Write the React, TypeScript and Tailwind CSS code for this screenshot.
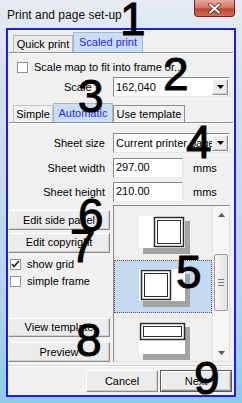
import React from "react";

const raised =
  "border border-t-white border-l-white border-b-[#8c8c8c] border-r-[#8c8c8c] shadow-[inset_-1px_-1px_0_#cfcfcf] bg-[#ececec]";
const sunken =
  "border border-t-[#8a8a8a] border-l-[#8a8a8a] border-b-[#e6e6e6] border-r-[#e6e6e6] bg-white";

function DropArrow() {
  return (
    <div className={`w-[16px] h-full flex items-center justify-center ${raised}`}>
      <svg width="7" height="4" viewBox="0 0 7 4">
        <path d="M0 0h7L3.5 4z" fill="#000" />
      </svg>
    </div>
  );
}

function Combo({ value }: { value: string }) {
  return (
    <div className={`w-[117px] h-[20px] flex items-stretch p-[1px] ${sunken}`}>
      <span className="flex-1 pl-[1px] leading-[16px] overflow-hidden whitespace-nowrap">{value}</span>
      <DropArrow />
    </div>
  );
}

function Check({ checked, label }: { checked?: boolean; label: string }) {
  return (
    <div className="flex items-center h-[13px]">
      <div className="w-[11px] h-[11px] border border-[#8f8f8f] bg-white flex items-center justify-center">
        {checked && (
          <svg width="9" height="8" viewBox="0 0 9 8">
            <path d="M1 4l2 2.5L8 1" stroke="#222" strokeWidth="1.6" fill="none" />
          </svg>
        )}
      </div>
      <span className="ml-[6px]">{label}</span>
    </div>
  );
}

function Btn({ label, w = "w-[102px]", extra = "" }: { label: string; w?: string; extra?: string }) {
  return (
    <div className={`${w} h-[20px] flex items-center justify-center ${raised} ${extra}`}>{label}</div>
  );
}

function Thumb({ kind }: { kind: "right" | "left" | "top" }) {
  return (
    <svg width="96" height="53" viewBox="0 0 96 53">
      <rect x="29" y="14" width="47" height="33" fill="#a3a3a3" />
      <rect x="25" y="9" width="46" height="32" fill="#fff" />
      {kind === "right" && (
        <g fill="none" stroke="#2b2b2b">
          <rect x="40.5" y="10.5" width="29" height="29" strokeWidth="1.5" />
          <rect x="43.5" y="13.5" width="23" height="23" fill="#fff" />
        </g>
      )}
      {kind === "left" && (
        <g fill="none" stroke="#2b2b2b">
          <rect x="27.5" y="10.5" width="29" height="29" strokeWidth="1.5" />
          <rect x="30.5" y="13.5" width="23" height="23" fill="#fff" />
        </g>
      )}
      {kind === "top" && (
        <g fill="none" stroke="#2b2b2b">
          <rect x="26.5" y="10.5" width="44" height="16" strokeWidth="1.5" />
          <rect x="29.5" y="13.5" width="38" height="10" fill="#fff" />
        </g>
      )}
    </svg>
  );
}

const marks = [
  { n: "1", c: "left-[120px] top-[-4px]" },
  { n: "2", c: "left-[163px] top-[51px]" },
  { n: "3", c: "left-[78px] top-[73px]" },
  { n: "4", c: "left-[186px] top-[119px]" },
  { n: "5", c: "left-[176px] top-[249px]" },
  { n: "6", c: "left-[78px] top-[192px]" },
  { n: "7", c: "left-[70px] top-[223px]" },
  { n: "8", c: "left-[76px] top-[317px]" },
  { n: "9", c: "left-[194px] top-[355px]" },
];

export default function App() {
  return (
    <div className="relative w-[242px] h-[403px] overflow-hidden bg-[linear-gradient(180deg,#e7ecf2_0%,#d3e0ee_20%,#bcd3ea_70%,#8ccbea_100%)] font-['Liberation_Sans',Arial,sans-serif] text-[11px] text-black">
      {/* title bar */}
      <div className="h-[28px] flex items-start">
        <span className="ml-[7px] mt-[6px] text-[12px] text-[#111]">Print and page set-up</span>
        <div className="ml-auto mr-[7px] w-[41px] h-[17px] rounded-b-[4px] border border-t-0 border-[#6d2a22] bg-[linear-gradient(180deg,#e9a99c_0%,#d7735f_50%,#c2402c_55%,#d0705a_100%)] flex items-center justify-center">
          <svg width="13" height="11" viewBox="0 0 13 11">
            <path d="M2 1.5l9 8M11 1.5l-9 8" stroke="#5a2a24" strokeWidth="3.6" strokeLinecap="round" />
            <path d="M2 1.5l9 8M11 1.5l-9 8" stroke="#fff" strokeWidth="2" strokeLinecap="round" />
          </svg>
        </div>
      </div>

      {/* client area */}
      <div className="ml-[6px] w-[230px] h-[369px] border-2 border-[#1c1cf2] bg-[#f0f0f0] flex flex-col">
        {/* main tabs */}
        <div className="h-[22px] flex items-end pl-[5px]">
          <div className="w-[60px] h-[17px] border border-b-0 border-[#b5b5b5] bg-[#ececec] flex items-center justify-center">
            Quick print
          </div>
          <div className="w-[70px] h-[20px] border border-b-0 border-[#a8b8cc] bg-[#c9ddf4] flex items-center justify-center text-[#2a2aff]">
            Scaled print
          </div>
        </div>
        <div className="h-[2px] mx-[1px] border-t border-[#8e8e8e] border-b border-b-white" />

        <div className="mt-[7px] pl-[9px]">
          <Check label="Scale map to fit into frame or..." />
        </div>

        <div className="mt-[3px] h-[20px] flex items-center">
          <span className="w-[105px] pl-[56px]">Scale</span>
          <Combo value="162,040" />
        </div>

        {/* sub tabs */}
        <div className="h-[25px] flex items-end pl-[5px]">
          <div className="w-[40px] h-[17px] border border-b-0 border-[#c4c4c4] flex items-center justify-center">
            Simple
          </div>
          <div className="w-[60px] h-[19px] border border-b-0 border-[#a8b8cc] bg-[#c9ddf4] flex items-center justify-center text-[#2a2aff]">
            Automatic
          </div>
          <div className="w-[72px] h-[17px] border border-b-0 border-[#8e8e8e] bg-[#f0f0f0] flex items-center justify-center">
            Use template
          </div>
        </div>
        <div className="h-[2px] mx-[1px] border-t border-[#8e8e8e] border-b border-b-white" />

        <div className="mt-[9px] h-[20px] flex items-center">
          <span className="w-[97px] text-right">Sheet size</span>
          <div className="ml-[8px]">
            <Combo value="Current printer page" />
          </div>
        </div>
        <div className="mt-[5px] h-[20px] flex items-center">
          <span className="w-[97px] text-right">Sheet width</span>
          <div className={`ml-[8px] w-[70px] h-[20px] pl-[2px] leading-[17px] ${sunken}`}>297.00</div>
          <span className="ml-[10px]">mms</span>
        </div>
        <div className="mt-[4px] h-[20px] flex items-center">
          <span className="w-[97px] text-right">Sheet height</span>
          <div className={`ml-[8px] w-[70px] h-[20px] pl-[2px] leading-[17px] ${sunken}`}>210.00</div>
          <span className="ml-[10px]">mms</span>
        </div>

        {/* body */}
        <div className="mt-[3px] h-[157px] flex">
          <div className="w-[102px] flex flex-col">
            <Btn label="Edit side panel" extra="mt-[5px]" />
            <Btn label="Edit copyright" extra="mt-[3px]" />
            <div className="mt-[5px] pl-[2px]">
              <Check checked label="show grid" />
            </div>
            <div className="mt-[4px] pl-[2px]">
              <Check label="simple frame" />
            </div>
            <Btn label="View template" extra="mt-[30px]" />
            <Btn label="Preview" extra="mt-[5px]" />
          </div>

          <div className="ml-[3px] w-[117px] h-[157px] border border-t-[#8a8a8a] border-l-[#8a8a8a] border-b-[#e0e0e0] border-r-[#e0e0e0] bg-[#efefef] flex overflow-hidden">
            <div className="w-[98px] pt-[1px] flex flex-col">
              <div className="h-[53px] shrink-0">
                <Thumb kind="right" />
              </div>
              <div className="h-[53px] shrink-0 bg-[#c4daf2] border border-dotted border-[#555]">
                <div className="-m-px">
                  <Thumb kind="left" />
                </div>
              </div>
              <div className="h-[53px] shrink-0">
                <Thumb kind="top" />
              </div>
            </div>
            <div className="w-[17px] bg-[#f6f6f6] border-l border-[#e3e3e3] flex flex-col items-center">
              <div className="h-[17px] w-full flex items-center justify-center">
                <svg width="7" height="4" viewBox="0 0 7 4">
                  <path d="M0 4h7L3.5 0z" fill="#555" />
                </svg>
              </div>
              <div className="mt-[31px] w-[14px] h-[57px] rounded-[2px] border border-[#9a9a9a] bg-[linear-gradient(90deg,#f4f4f4,#e3e3e3)] flex flex-col items-center justify-center gap-[2px]">
                <div className="w-[6px] h-px bg-[#777]" />
                <div className="w-[6px] h-px bg-[#777]" />
                <div className="w-[6px] h-px bg-[#777]" />
              </div>
              <div className="mt-auto h-[17px] w-full flex items-center justify-center">
                <svg width="7" height="4" viewBox="0 0 7 4">
                  <path d="M0 0h7L3.5 4z" fill="#555" />
                </svg>
              </div>
            </div>
          </div>
        </div>

        <div className="mt-[3px] h-[2px] border-t border-[#d4d4d4] border-b border-b-white" />

        <div className="mt-[3px] flex">
          <Btn label="Cancel" w="w-[72px] h-[22px]" extra="ml-[78px]" />
          <div className="ml-[2px] w-[72px] h-[22px] border border-[#5a5a5a] flex">
            <div className={`flex-1 flex items-center justify-center ${raised}`}>Next</div>
          </div>
        </div>
      </div>

      {/* annotation numbers */}
      {marks.map((m) => (
        <span
          key={m.n}
          className={`absolute ${m.c} text-[46px] leading-none font-['Liberation_Sans',Arial,sans-serif] text-black [-webkit-text-stroke:1px_#000]`}
        >
          {m.n}
        </span>
      ))}
    </div>
  );
}
